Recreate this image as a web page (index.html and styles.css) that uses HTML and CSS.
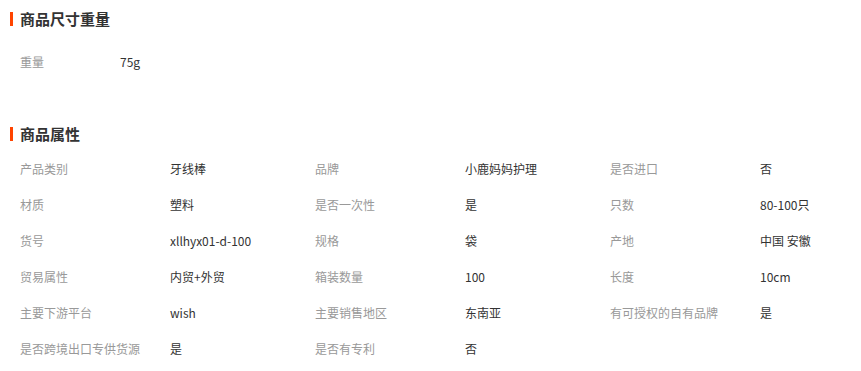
FILE: index.html
```html
<!DOCTYPE html>
<html lang="zh-CN">
<head>
<meta charset="utf-8">
<title>商品属性</title>
<link rel="stylesheet" href="styles.css">
</head>
<body>
<section class="sec sec-size">
  <h2 class="sec-title"><span class="bar"></span>商品尺寸重量</h2>
  <div class="grid-size">
    <div class="lbl">重量</div><div class="val">75g</div>
  </div>
</section>
<section class="sec sec-attr">
  <h2 class="sec-title"><span class="bar"></span>商品属性</h2>
  <div class="grid-attr">
    <div class="lbl">产品类别</div><div class="val">牙线棒</div>
    <div class="lbl">品牌</div><div class="val">小鹿妈妈护理</div>
    <div class="lbl">是否进口</div><div class="val">否</div>

    <div class="lbl">材质</div><div class="val">塑料</div>
    <div class="lbl">是否一次性</div><div class="val">是</div>
    <div class="lbl">只数</div><div class="val">80-100只</div>

    <div class="lbl">货号</div><div class="val">xllhyx01-d-100</div>
    <div class="lbl">规格</div><div class="val">袋</div>
    <div class="lbl">产地</div><div class="val">中国 安徽</div>

    <div class="lbl">贸易属性</div><div class="val">内贸+外贸</div>
    <div class="lbl">箱装数量</div><div class="val">100</div>
    <div class="lbl">长度</div><div class="val">10cm</div>

    <div class="lbl">主要下游平台</div><div class="val">wish</div>
    <div class="lbl">主要销售地区</div><div class="val">东南亚</div>
    <div class="lbl">有可授权的自有品牌</div><div class="val">是</div>

    <div class="lbl">是否跨境出口专供货源</div><div class="val">是</div>
    <div class="lbl">是否有专利</div><div class="val">否</div>
  </div>
</section>
</body>
</html>
```
FILE: styles.css
```css
html, body {
  margin: 0;
  padding: 0;
  background: #fff;
}
body {
  font-family: "Noto Sans CJK SC", "Noto Sans", sans-serif;
  font-size: 12px;
  color: #333;
  padding: 7px 0 0 10px;
  width: 851px;
}
.sec-title {
  display: flex;
  align-items: center;
  margin: 0;
  height: 24px;
  font-size: 15px;
  font-weight: bold;
  color: #333;
  line-height: 24px;
}
.bar {
  display: block;
  width: 3px;
  height: 14px;
  background: #ff4400;
  margin-right: 7px;
}
.sec-size {
  margin-bottom: 42px;
}
.grid-size {
  display: grid;
  grid-template-columns: 100px 1fr;
  margin-top: 13px;
  padding-left: 10px;
}
.grid-attr {
  display: grid;
  grid-template-columns: 150px 145px 150px 145px 150px 1fr;
  margin-top: 5px;
  padding-left: 10px;
}
.lbl, .val {
  height: 36px;
  line-height: 36px;
  white-space: nowrap;
}
.lbl {
  color: #999;
}
.val {
  color: #333;
}
```
